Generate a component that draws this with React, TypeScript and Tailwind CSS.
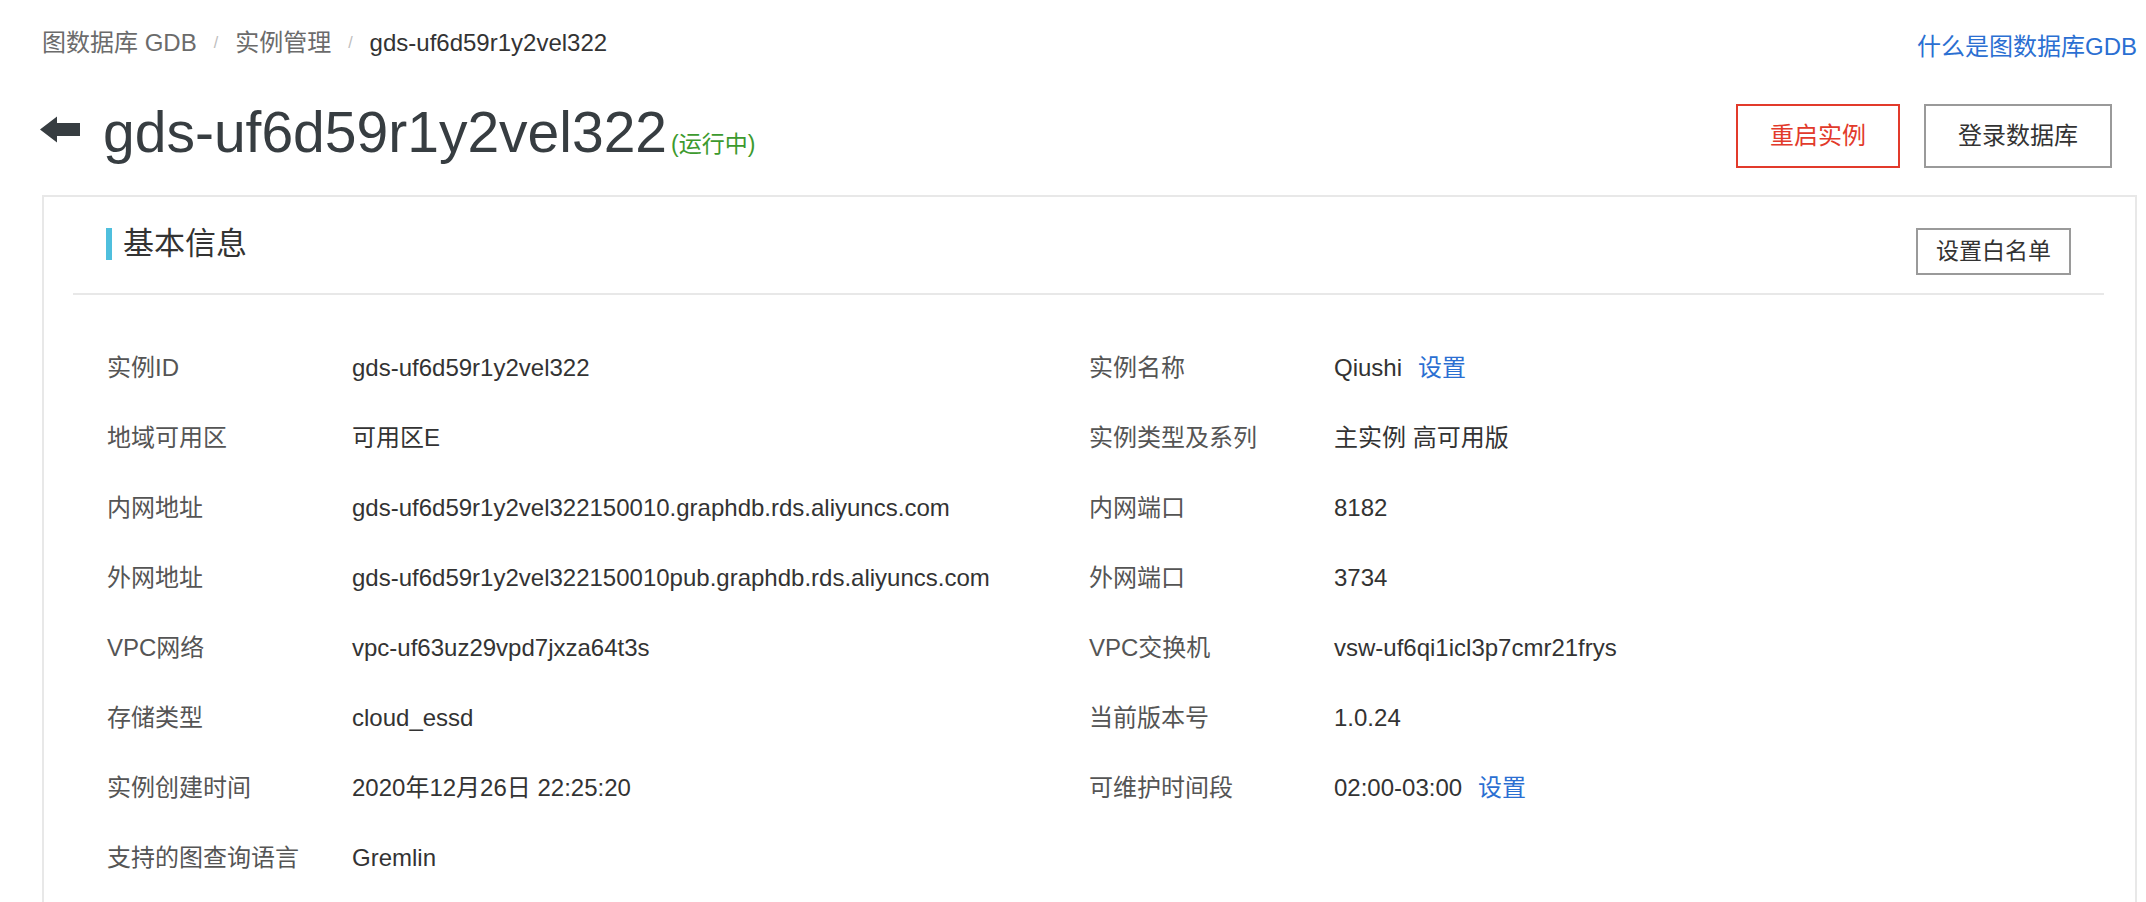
import React from "react";

const FONT = '"Liberation Sans", "Noto Sans CJK SC", Arial, sans-serif';

type Cell = { label: string; value: string; link?: string };

const rows: [Cell, Cell | null][] = [
  [
    { label: "实例ID", value: "gds-uf6d59r1y2vel322" },
    { label: "实例名称", value: "Qiushi", link: "设置" },
  ],
  [
    { label: "地域可用区", value: "可用区E" },
    { label: "实例类型及系列", value: "主实例 高可用版" },
  ],
  [
    { label: "内网地址", value: "gds-uf6d59r1y2vel322150010.graphdb.rds.aliyuncs.com" },
    { label: "内网端口", value: "8182" },
  ],
  [
    { label: "外网地址", value: "gds-uf6d59r1y2vel322150010pub.graphdb.rds.aliyuncs.com" },
    { label: "外网端口", value: "3734" },
  ],
  [
    { label: "VPC网络", value: "vpc-uf63uz29vpd7jxza64t3s" },
    { label: "VPC交换机", value: "vsw-uf6qi1icl3p7cmr21frys" },
  ],
  [
    { label: "存储类型", value: "cloud_essd" },
    { label: "当前版本号", value: "1.0.24" },
  ],
  [
    { label: "实例创建时间", value: "2020年12月26日 22:25:20" },
    { label: "可维护时间段", value: "02:00-03:00", link: "设置" },
  ],
  [{ label: "支持的图查询语言", value: "Gremlin" }, null],
];

function InfoCell({ cell }: { cell: Cell | null }) {
  if (!cell) return <div className="h-[70px]" />;
  return (
    <div className="flex h-[70px] items-center text-[24px] leading-[24px]">
      <div className="w-[245px] shrink-0 text-[#555]">{cell.label}</div>
      <div className="text-[#333]">{cell.value}</div>
      {cell.link && <a className="ml-[16px] text-[#2b6fd2]">{cell.link}</a>}
    </div>
  );
}

export default function App() {
  return (
    <div className="min-h-screen bg-white pl-[42px] pr-[9px]" style={{ fontFamily: FONT }}>
      {/* breadcrumb row */}
      <div className="flex items-start justify-between pt-[31px]">
        <div className="flex items-center text-[24px] leading-[24px]">
          <span className="text-[#6b6b6b]">图数据库 GDB</span>
          <span className="mx-[17px] text-[16px] text-[#bdbdbd]">/</span>
          <span className="text-[#6b6b6b]">实例管理</span>
          <span className="mx-[17px] text-[16px] text-[#bdbdbd]">/</span>
          <span className="text-[#333]">gds-uf6d59r1y2vel322</span>
        </div>
        <a className="pt-[4px] text-[24px] leading-[24px] text-[#2b6fd2]">什么是图数据库GDB</a>
      </div>

      {/* title row */}
      <div className="mt-[45px] flex h-[64px] items-center justify-between pr-[25px]">
        <div className="flex items-center">
          <svg width="40" height="27" viewBox="0 0 40 27" className="-ml-[2px] mb-[14px]">
            <path d="M0 13.5 L17 0.5 L17 7 L40 7 L40 20 L17 20 L17 26.5 Z" fill="#373d41" />
          </svg>
          <div className="mb-[6px] ml-[23px] flex items-baseline">
            <span className="text-[57px] leading-[57px] text-[#373d41]">gds-uf6d59r1y2vel322</span>
            <span className="ml-[4px] text-[23px] text-[#3c9a2e]">(运行中)</span>
          </div>
        </div>
        <div className="flex items-center gap-[24px]">
          <button className="h-[64px] w-[164px] border-2 border-[#e23a2b] bg-white text-[24px] text-[#e23a2b]">
            重启实例
          </button>
          <button className="h-[64px] w-[188px] border-2 border-[#9a9a9a] bg-white text-[24px] text-[#333]">
            登录数据库
          </button>
        </div>
      </div>

      {/* card */}
      <div className="mt-[27px] border-2 border-[#e8e8e8] pb-[40px] pl-[29px] pr-[31px]">
        <div className="flex items-start justify-between border-b-2 border-[#e8e8e8] px-[33px] pb-[18px] pt-[31px]">
          <div className="flex items-center">
            <div className="h-[32px] w-[6px] bg-[#4fbfdd]" />
            <span className="ml-[11px] text-[31px] leading-[32px] text-[#333]">基本信息</span>
          </div>
          <button className="h-[47px] w-[155px] border-2 border-[#9a9a9a] bg-white text-[23px] text-[#333]">
            设置白名单
          </button>
        </div>
        <div className="grid grid-cols-2 pl-[34px] pr-[33px] pt-[38px]">
          {rows.map(([l, r], i) => (
            <React.Fragment key={i}>
              <InfoCell cell={l} />
              <InfoCell cell={r} />
            </React.Fragment>
          ))}
        </div>
      </div>
    </div>
  );
}
